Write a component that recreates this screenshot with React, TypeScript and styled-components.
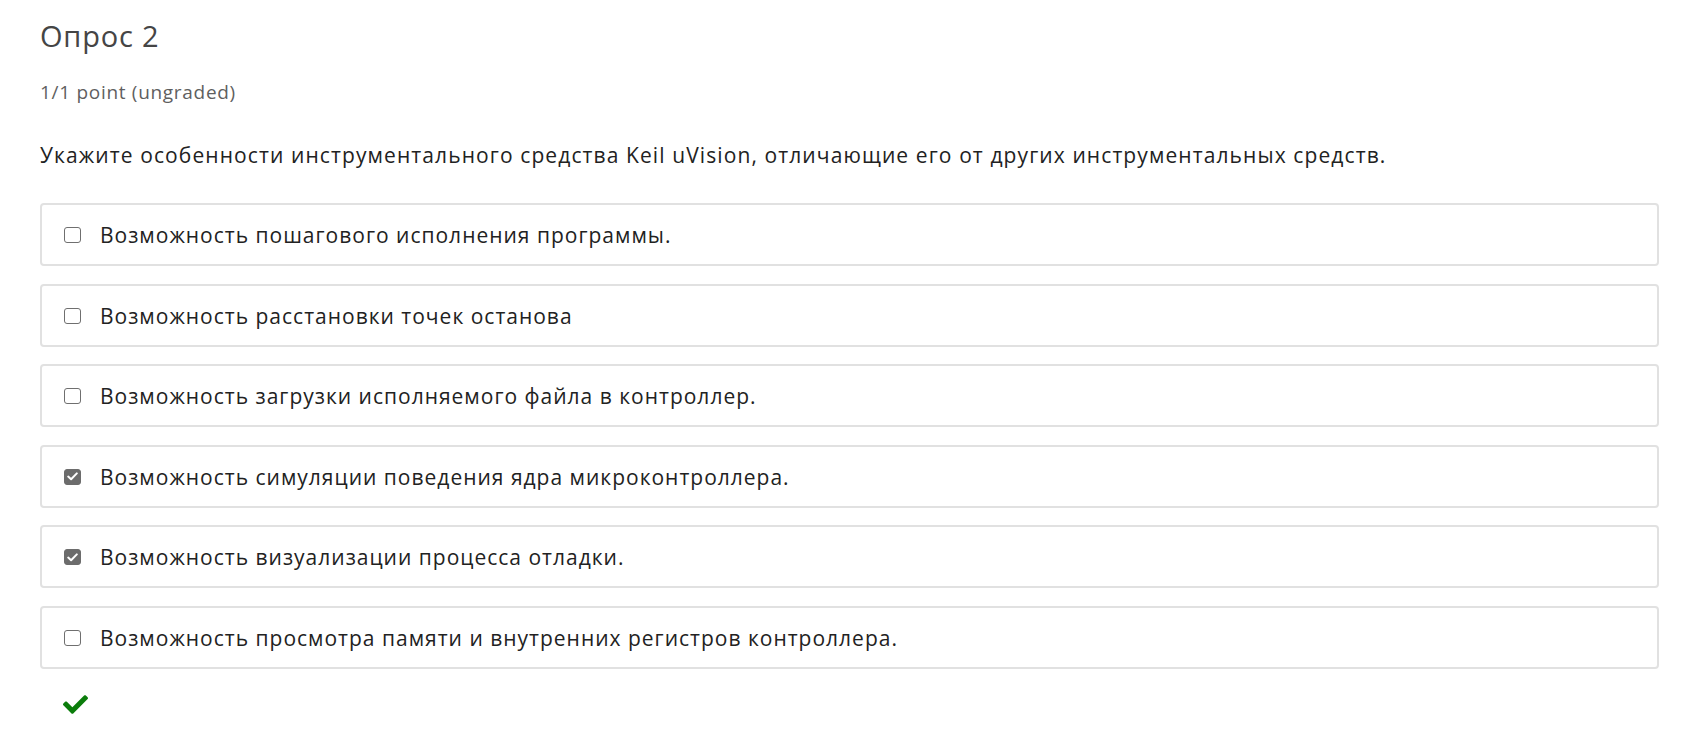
import styled, { createGlobalStyle } from "styled-components";
import { FaCheck } from "react-icons/fa";

type Element = JSX.Element;

const GlobalStyle = createGlobalStyle`
  html, body {
    margin: 0;
    padding: 0;
    background: #ffffff;
  }
  body {
    font-family: "Open Sans", "Noto Sans", sans-serif;
    color: #2b2b2b;
  }
`;

const Page = styled.div`
  padding: 18px 30px 40px 40px;
`;

const Title = styled.h2`
  margin: 0;
  font-size: 29px;
  line-height: 36px;
  font-weight: 400;
  letter-spacing: 0.8px;
  color: #454545;
`;

const Points = styled.div`
  margin-top: 26px;
  font-size: 19px;
  line-height: 24px;
  letter-spacing: 0.7px;
  color: #5f5f5f;
`;

const Question = styled.p`
  margin: 37px 0 34px;
  font-size: 21px;
  line-height: 28px;
  letter-spacing: 1.1px;
  color: #222222;
`;

const Options = styled.div`
  display: flex;
  flex-direction: column;
  gap: 17.5px;
`;

const Option = styled.label`
  display: flex;
  align-items: center;
  gap: 19px;
  padding: 16px 22px 15px;
  border: 2px solid #e1e1e1;
  border-radius: 4px;
  font-size: 21px;
  line-height: 28px;
  letter-spacing: 1px;
  color: #222222;
`;

const Box = styled.span<{ $checked: boolean }>`
  flex: none;
  width: 17px;
  height: 16px;
  box-sizing: border-box;
  border-radius: 3px;
  border: 1.5px solid ${(p) => (p.$checked ? "#6c6c6c" : "#6f6f6f")};
  background: ${(p) => (p.$checked ? "#6c6c6c" : "#ffffff")};
  display: flex;
  align-items: center;
  justify-content: center;
`;

const Status = styled.div`
  margin: 23px 0 0 23px;
  color: #0b7d0b;
  font-size: 25px;
  line-height: 0;
`;

const options: { text: string; checked: boolean }[] = [
  { text: "Возможность пошагового исполнения программы.", checked: false },
  { text: "Возможность расстановки точек останова", checked: false },
  { text: "Возможность загрузки исполняемого файла в контроллер.", checked: false },
  { text: "Возможность симуляции поведения ядра микроконтроллера.", checked: true },
  { text: "Возможность визуализации процесса отладки.", checked: true },
  {
    text: "Возможность просмотра памяти и внутренних регистров контроллера.",
    checked: false,
  },
];

function App(): Element {
  return (
    <>
      <GlobalStyle />
      <Page>
        <Title>Опрос 2</Title>
        <Points>1/1 point (ungraded)</Points>
        <Question>
          Укажите особенности инструментального средства Keil uVision,
          отличающие его от других инструментальных средств.
        </Question>
        <Options>
          {options.map((o) => (
            <Option key={o.text}>
              <Box $checked={o.checked}>
                {o.checked && (
                  <svg width="11" height="9" viewBox="0 0 11 9">
                    <path
                      d="M1.2 4.6 L4.1 7.3 L9.8 1.4"
                      fill="none"
                      stroke="#ffffff"
                      strokeWidth="2"
                      strokeLinecap="round"
                      strokeLinejoin="round"
                    />
                  </svg>
                )}
              </Box>
              {o.text}
            </Option>
          ))}
        </Options>
        <Status>
          <FaCheck />
        </Status>
      </Page>
    </>
  );
}

export default App;
